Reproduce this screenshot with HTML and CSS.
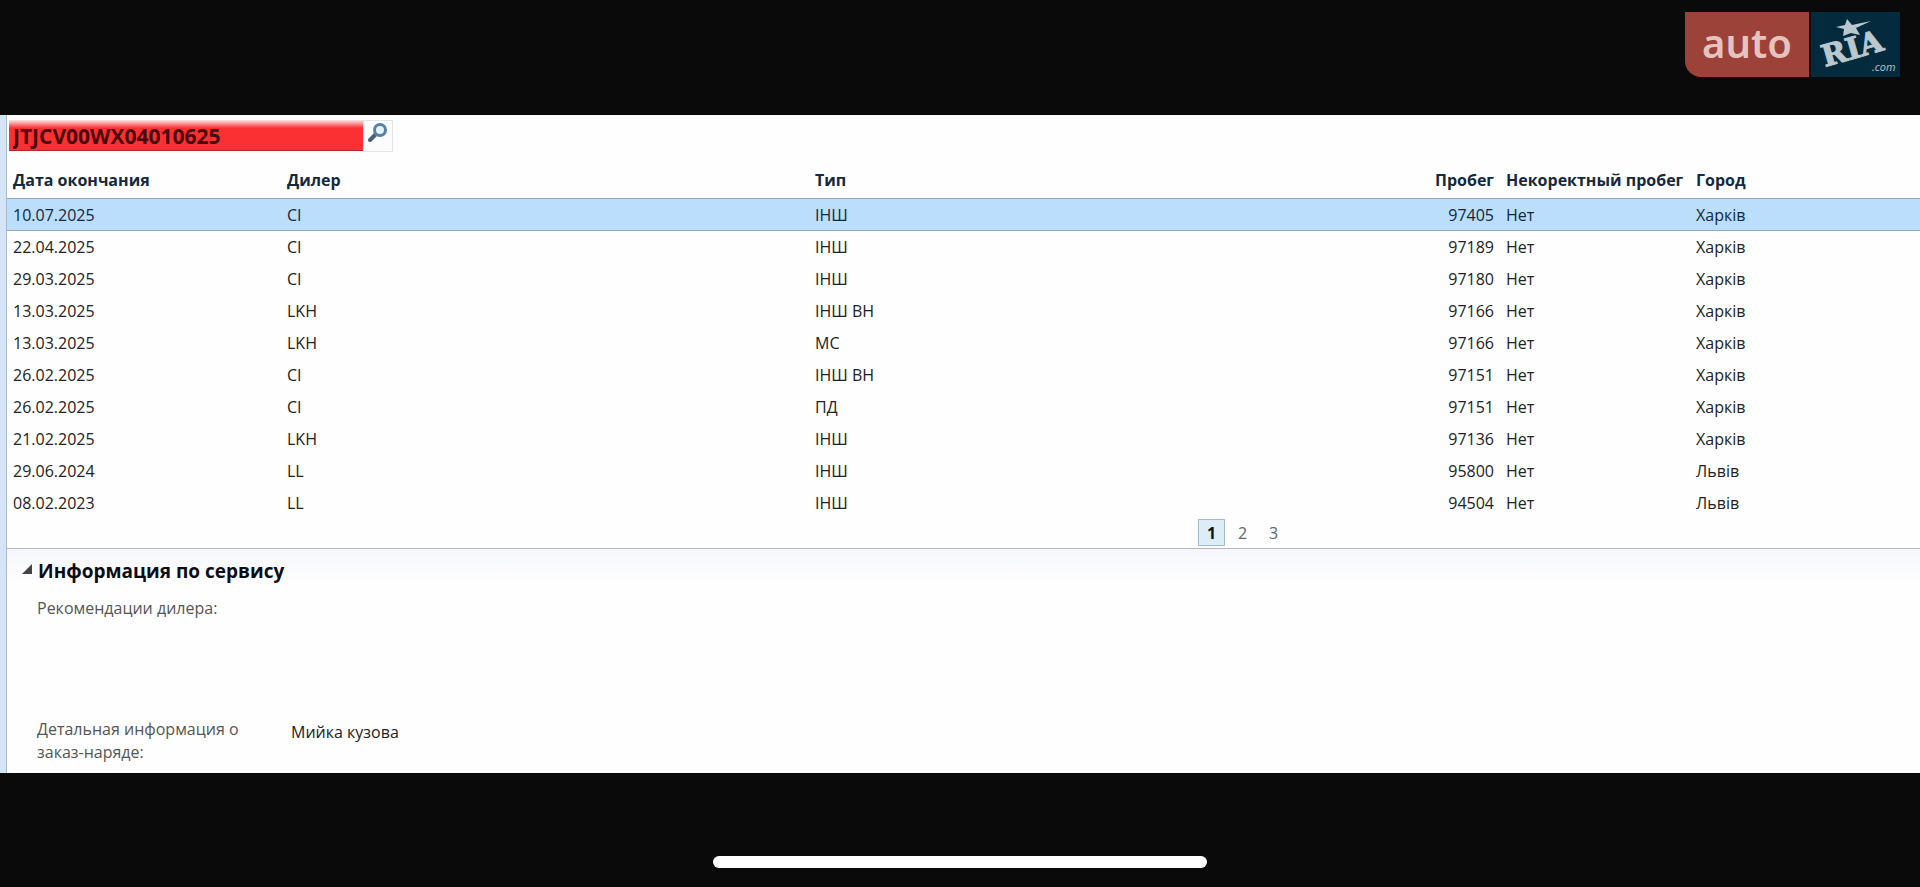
FILE: index.html
```html
<!DOCTYPE html>
<html lang="ru">
<head>
  <meta charset="UTF-8">
  <meta name="viewport" content="width=device-width, initial-scale=1.0">
  <title>Информация по сервису</title>
  <link rel="stylesheet" href="styles.css">
</head>
<body>

  <header class="top-bar">
    <a class="logo" href="#" aria-label="auto RIA.com">
      <span class="logo-auto">auto</span>
      <svg class="logo-ria" viewBox="0 0 89 65" width="89" height="65">
        <path class="logo-mark" d="M36 7l5 6 19-4-15 7 4 7-9-2-8 3 1-7-8-2 9-2z"/>
        <text class="logo-name" transform="translate(14 55) rotate(-16)">RIA</text>
        <text class="logo-com" x="61" y="59">.com</text>
      </svg>
    </a>
  </header>

  <main class="panel">
    <form class="search">
      <input class="search-input" type="text" value="JTJCV00WX04010625" aria-label="VIN">
      <button class="search-button" type="button" aria-label="Поиск">
        <svg viewBox="0 0 20 20" width="20" height="20">
          <path d="M2 17l6-6" stroke="#4d6078" stroke-width="4" stroke-linecap="round"/>
          <circle cx="12" cy="7" r="5.5" fill="#e4f1fb" stroke="#5580a8" stroke-width="3"/>
        </svg>
      </button>
    </form>

    <table class="history">
      <colgroup>
        <col class="col-date">
        <col class="col-dealer">
        <col>
        <col class="col-mileage">
        <col class="col-wrong">
        <col class="col-city">
      </colgroup>
      <thead>
        <tr><th>Дата окончания</th><th>Дилер</th><th>Тип</th><th class="num">Пробег</th><th>Некоректный пробег</th><th>Город</th></tr>
      </thead>
      <tbody>
        <tr class="selected"><td>10.07.2025</td><td>CI</td><td>ІНШ</td><td class="num">97405</td><td>Нет</td><td>Харків</td></tr>
        <tr><td>22.04.2025</td><td>CI</td><td>ІНШ</td><td class="num">97189</td><td>Нет</td><td>Харків</td></tr>
        <tr><td>29.03.2025</td><td>CI</td><td>ІНШ</td><td class="num">97180</td><td>Нет</td><td>Харків</td></tr>
        <tr><td>13.03.2025</td><td>LKH</td><td>ІНШ ВН</td><td class="num">97166</td><td>Нет</td><td>Харків</td></tr>
        <tr><td>13.03.2025</td><td>LKH</td><td>МС</td><td class="num">97166</td><td>Нет</td><td>Харків</td></tr>
        <tr><td>26.02.2025</td><td>CI</td><td>ІНШ ВН</td><td class="num">97151</td><td>Нет</td><td>Харків</td></tr>
        <tr><td>26.02.2025</td><td>CI</td><td>ПД</td><td class="num">97151</td><td>Нет</td><td>Харків</td></tr>
        <tr><td>21.02.2025</td><td>LKH</td><td>ІНШ</td><td class="num">97136</td><td>Нет</td><td>Харків</td></tr>
        <tr><td>29.06.2024</td><td>LL</td><td>ІНШ</td><td class="num">95800</td><td>Нет</td><td>Львів</td></tr>
        <tr><td>08.02.2023</td><td>LL</td><td>ІНШ</td><td class="num">94504</td><td>Нет</td><td>Львів</td></tr>
      </tbody>
    </table>

    <nav class="pager">
      <a class="page current" href="#">1</a>
      <a class="page" href="#">2</a>
      <a class="page" href="#">3</a>
    </nav>

    <section class="service">
      <h2 class="service-title">
        <svg viewBox="0 0 10 14" width="10" height="14"><path d="M10 0v10H0z" fill="#444"/></svg>
        Информация по сервису
      </h2>
      <dl class="details">
        <dt>Рекомендации дилера:</dt>
        <dd></dd>
        <dt>Детальная информация о заказ-наряде:</dt>
        <dd>Мийка кузова</dd>
      </dl>
    </section>
  </main>

  <footer class="bottom-bar">
    <div class="home-indicator"></div>
  </footer>

</body>
</html>
```
FILE: styles.css
```css
* {
  box-sizing: border-box;
}
body {
  margin: 0;
  min-height: 100vh;
  display: flex;
  flex-direction: column;
  background: #0a0a0a;
  color: #222;
  font-family: "Open Sans", "Noto Sans", sans-serif;
  font-size: 16px;
  line-height: 23px;
}

/* Logo */
.top-bar {
  display: flex;
  justify-content: flex-end;
  padding: 12px 20px 38px;
}
.logo {
  display: flex;
  gap: 2px;
  height: 65px;
  text-decoration: none;
}
.logo-auto {
  width: 124px;
  border-bottom-left-radius: 16px;
  background: #9c4238;
  color: #e6c3bf;
  font-family: "Noto Sans", sans-serif;
  font-size: 40px;
  font-weight: 600;
  line-height: 61px;
  text-align: center;
}
.logo-ria {
  background: #042b3d;
  fill: #b9c8cf;
}
.logo-name {
  font-family: "DejaVu Serif", serif;
  font-size: 30px;
  font-weight: bold;
  stroke: #b9c8cf;
  stroke-width: 1px;
}
.logo-com {
  font-family: "Open Sans", sans-serif;
  font-size: 11px;
  font-style: italic;
}

/* Main panel */
.panel {
  padding-left: 1px;
  border-left: 6px solid #d5e4f7;
  background: #fefefe;
  box-shadow: inset 1px 0 #a9bccb;
}
.search {
  display: flex;
  padding: 5px 2px 0;
}
.search-input {
  width: 354px;
  height: 31px;
  padding: 2px 4px 0;
  border: 0;
  border-bottom: 1px solid #b3282b;
  background: linear-gradient(#fde5e5, #fa3033 8px);
  color: #4a0508;
  font-family: inherit;
  font-size: 21px;
  font-weight: bold;
}
.search-button {
  width: 30px;
  height: 32px;
  padding: 0 4px 6px;
  border: 1px solid #e2e6ec;
  background: #fcfcfe;
}
.search-button svg {
  display: block;
  fill: none;
}

.history {
  width: 100%;
  border-collapse: collapse;
  table-layout: fixed;
}
.history th,
.history td {
  height: 32px;
  padding: 2px 6px 0;
  text-align: left;
  white-space: nowrap;
}
.history th {
  height: 46px;
  padding-top: 12px;
  color: #14293d;
  font-weight: bold;
}
.history .num {
  text-align: right;
}
.history .selected td {
  border-top: 1px solid #8fa9bd;
  border-bottom: 1px solid #8fa9bd;
  background: #bbdefd;
  color: #12273d;
}
.col-date {
  width: 274px;
}
.col-dealer {
  width: 528px;
}
.col-mileage {
  width: 81px;
}
.col-wrong {
  width: 190px;
}
.col-city {
  width: 230px;
}

.pager {
  display: flex;
  justify-content: center;
  gap: 4px;
  padding: 1px 0 2px 558px;
}
.page {
  width: 27px;
  height: 27px;
  border: 1px solid transparent;
  color: #5b6670;
  line-height: 27px;
  text-align: center;
  text-decoration: none;
}
.page.current {
  border-color: #a3bccb;
  background: #dcedf8;
  color: #111;
  font-weight: bold;
}

/* Service info */
.service {
  padding: 9px 30px;
  border-top: 1px solid #b4b8c0;
  background: linear-gradient(#f6f7fc, #fefefe 36px);
}
.service-title {
  display: flex;
  align-items: center;
  gap: 6px;
  margin: 0 0 13px -15px;
  color: #0c0c14;
  font-size: 19px;
  line-height: 26px;
}
.details {
  display: grid;
  grid-template-columns: 224px 1fr;
  grid-template-rows: 91px auto;
  column-gap: 30px;
  row-gap: 30px;
  margin: 0;
}
.details dt {
  color: #555;
}
.details dd {
  margin: 0;
  padding-top: 3px;
}

/* Home indicator */
.bottom-bar {
  flex: 1;
  display: flex;
  align-items: flex-end;
  justify-content: center;
  padding: 19px;
}
.home-indicator {
  width: 494px;
  height: 12px;
  border-radius: 6px;
  background: #fff;
}
```
